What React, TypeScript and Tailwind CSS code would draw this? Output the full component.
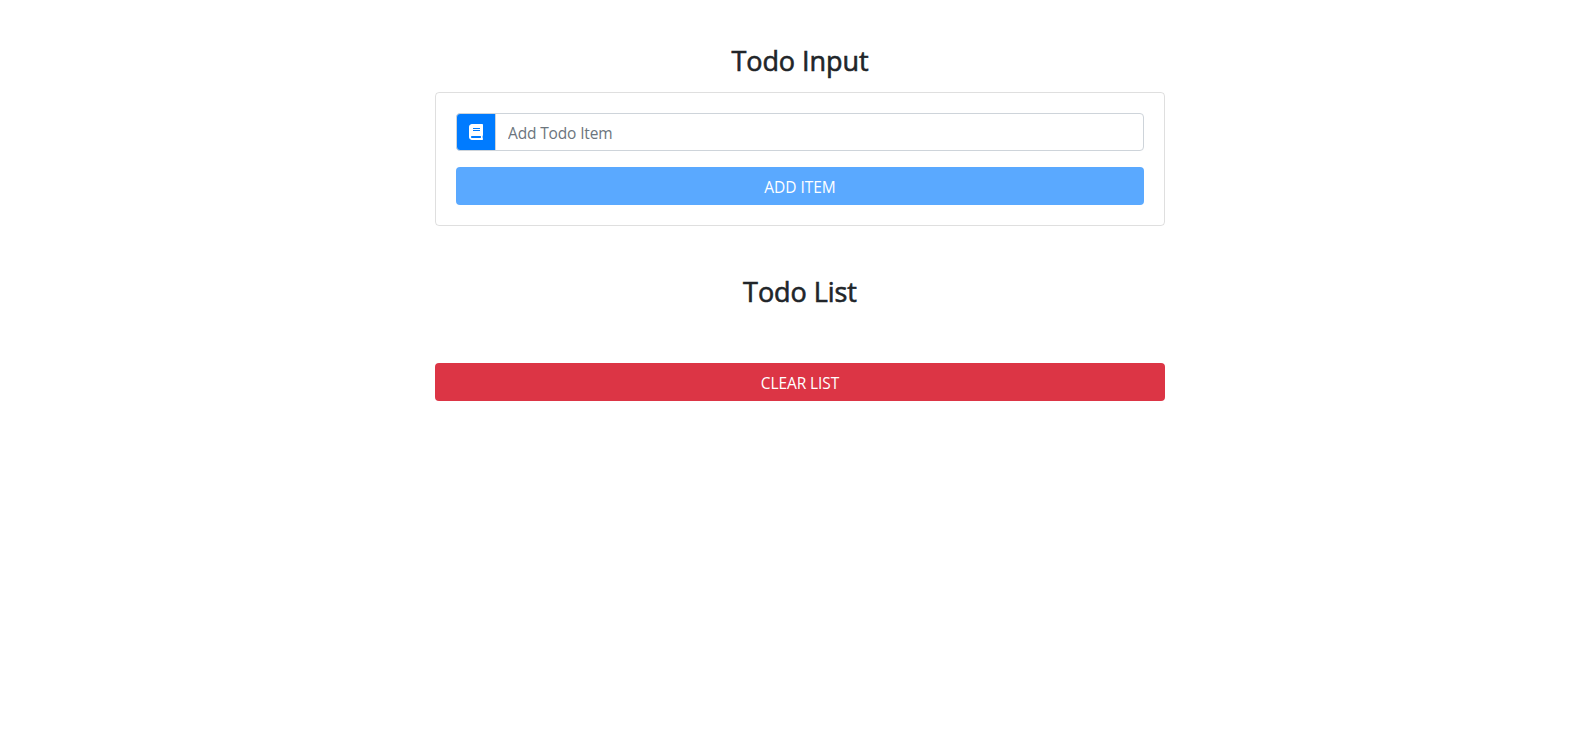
import { FaBook } from "react-icons/fa";

export default function App() {
  return (
    <main className="flex min-h-screen justify-center bg-white pl-[18px] font-['Open_Sans',sans-serif] text-base text-[#212529]">
      <div className="w-[730px] pt-11">
        <h3 className="mb-3.5 text-center text-[27px] leading-[34px] font-medium tracking-[-0.05px] [-webkit-text-stroke:0.6px_#212529]">Todo Input</h3>
        <section className="rounded border border-black/[.125] p-5">
          <form onSubmit={(e) => e.preventDefault()}>
            <div className="flex h-[38px]">
              <div className="flex items-center rounded-l border border-[#ced4da] bg-[#007bff] px-3 text-white">
                <FaBook className="h-4 w-[14px]" />
              </div>
              <input
                className="-ml-px min-w-0 flex-1 rounded-r border border-[#ced4da] px-3 pt-1 text-[15.5px] tracking-[-0.15px] placeholder:text-[#6c757d]"
                placeholder="Add Todo Item"
              />
            </div>
            <button className="mt-4 block h-[38px] w-full rounded bg-[#5aa9ff] pt-[3px] text-[15.5px] tracking-[-0.02px] text-white" disabled>ADD ITEM</button>
          </form>
        </section>
        <section className="pt-[49px]">
          <h3 className="text-center text-[27px] leading-[34px] font-medium tracking-[-0.05px] [-webkit-text-stroke:0.6px_#212529]">Todo List</h3>
          <button className="mt-[54px] block h-[38px] w-full rounded bg-[#dc3545] pt-[3px] text-[15.5px] tracking-[-0.1px] text-white">CLEAR LIST</button>
        </section>
      </div>
    </main>
  );
}
